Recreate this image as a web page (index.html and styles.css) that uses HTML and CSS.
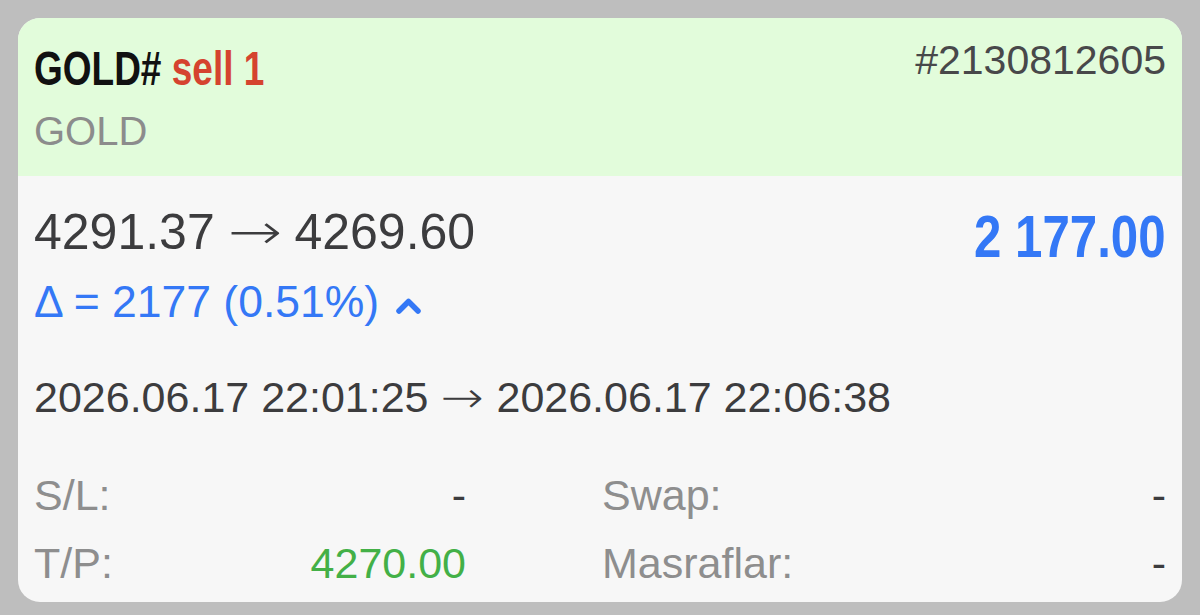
FILE: index.html
```html
<!DOCTYPE html>
<html lang="tr">
<head>
    <meta charset="UTF-8">
    <meta name="viewport" content="width=device-width, initial-scale=1.0">
    <title>GOLD# sell 1</title>
    <link rel="stylesheet" href="styles.css">
</head>
<body>
    <div class="deal-card">
        <div class="deal-header">
            <div class="deal-titles">
                <div class="deal-title">GOLD# <span class="deal-type">sell 1</span></div>
                <div class="deal-symbol">GOLD</div>
            </div>
            <div class="deal-ticket">#2130812605</div>
        </div>

        <div class="deal-body">
            <div class="price-row">
                <div class="prices">4291.37 <span class="arrow">→</span> 4269.60</div>
                <div class="profit">2 177.00</div>
            </div>
            <div class="delta">
                Δ = 2177 (0.51%)
                <svg class="chevron" width="27" height="18" viewBox="0 0 27 18">
                    <polyline points="4,14 13.5,4.5 23,14" fill="none" stroke="#3478f6" stroke-width="5.5" stroke-linecap="round" stroke-linejoin="round"/>
                </svg>
            </div>

            <div class="times">2026.06.17 22:01:25 <span class="arrow">→</span> 2026.06.17 22:06:38</div>

            <div class="stats">
                <div class="stat">
                    <span class="stat-label">S/L:</span>
                    <span class="stat-value">-</span>
                </div>
                <div class="stat">
                    <span class="stat-label">Swap:</span>
                    <span class="stat-value">-</span>
                </div>
                <div class="stat">
                    <span class="stat-label">T/P:</span>
                    <span class="stat-value tp">4270.00</span>
                </div>
                <div class="stat">
                    <span class="stat-label">Masraflar:</span>
                    <span class="stat-value">-</span>
                </div>
            </div>
        </div>
    </div>
</body>
</html>
```

FILE: styles.css
```css
body {
    margin: 0;
    padding: 18px;
    background: #bebebe;
    font-family: 'Liberation Sans', Arial, sans-serif;
    color: #3c3c3e;
}

.deal-card {
    width: 1164px;
    border-radius: 22px;
    overflow: hidden;
    background: #f7f7f7;
}

/* Header with symbol and ticket */
.deal-header {
    display: flex;
    justify-content: space-between;
    align-items: flex-start;
    padding: 22px 16px 21px 16px;
    background: #e2fcdb;
}

/* no condensed face installed, so squeeze the bold one */
.deal-title {
    display: inline-block;
    transform: scaleX(0.755);
    transform-origin: left center;
    font-weight: bold;
    font-size: 49px;
    line-height: 56px;
    white-space: nowrap;
    color: #111111;
}

.deal-type {
    color: #d5432f;
}

.deal-symbol {
    margin-top: 11px;
    font-size: 40px;
    line-height: 48px;
    color: #8c8c8c;
}

.deal-ticket {
    font-size: 41px;
    line-height: 40px;
    color: #48484a;
}

/* Body */
.deal-body {
    padding: 26px 16px 13px 16px;
}

.price-row {
    display: flex;
    justify-content: space-between;
    align-items: flex-start;
}

.prices {
    font-size: 50px;
    line-height: 60px;
}

.arrow {
    display: inline-block;
    font-family: 'DejaVu Sans', sans-serif;
    font-weight: 200;
}

.prices .arrow {
    margin: 0 5px;
    transform: scaleX(1.3);
}

.times .arrow {
    margin: 0 4px;
    transform: scaleX(1.2);
}

.profit {
    margin-top: 10px;
    transform: scaleX(0.82);
    transform-origin: right center;
    font-weight: bold;
    font-size: 60px;
    line-height: 50px;
    white-space: nowrap;
    color: #3478f6;
}

.delta {
    margin-top: 14px;
    font-size: 44.5px;
    line-height: 52px;
    color: #3478f6;
}

.chevron {
    margin-left: 3px;
    vertical-align: 2px;
}

.times {
    margin-top: 43px;
    font-size: 43px;
    line-height: 52px;
}

.stats {
    display: grid;
    grid-template-columns: 432px 1fr;
    column-gap: 136px;
    row-gap: 16px;
    margin-top: 46px;
}

.stat {
    display: flex;
    justify-content: space-between;
    font-size: 43px;
    line-height: 52px;
}

.stat-label {
    color: #8e8e8e;
}

.stat-value {
    color: #3c3c3e;
}

.stat-value.tp {
    color: #43b047;
}
```
